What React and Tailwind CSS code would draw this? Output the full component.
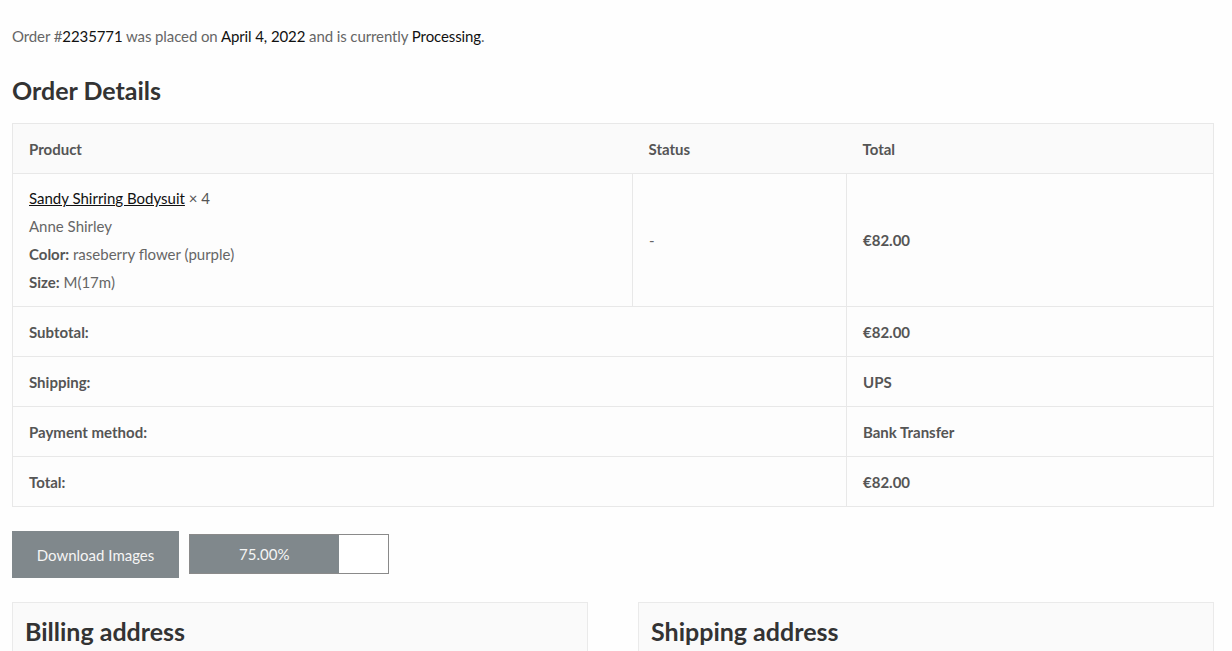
export default function App() {
  const rows = [
    { label: "Subtotal:", value: "€82.00" },
    { label: "Shipping:", value: "UPS" },
    { label: "Payment method:", value: "Bank Transfer" },
    { label: "Total:", value: "€82.00" },
  ];
  const progress = 75;

  return (
    <div className="min-h-screen bg-[#fefefe] px-3 pt-[22px] text-[15px] leading-[28px] text-[#666]" style={{ fontFamily: "Lato, 'Liberation Sans', sans-serif" }}>
      <p className="tracking-[-0.1px]">
        Order #<span className="text-[#111]">2235771</span> was placed on{" "}
        <span className="text-[#111]">April 4, 2022</span> and is currently{" "}
        <span className="text-[#111]">Processing</span>.
      </p>

      <h2 className="mt-[22px] text-[25px] font-bold leading-[36px] text-[#333]">Order Details</h2>

      <table className="mt-[15px] w-[1202px] border-collapse border border-[#e8e8e8] bg-[#fdfdfd]">
        <thead>
          <tr className="bg-[#fafafa] text-left">
            <th className="w-[620px] border-b border-[#e8e8e8] px-4 py-[10.5px] font-bold text-[#555]">Product</th>
            <th className="w-[214px] border-b border-[#e8e8e8] px-4 py-[10.5px] font-bold text-[#555]">Status</th>
            <th className="border-b border-[#e8e8e8] px-4 py-[10.5px] font-bold text-[#555]">Total</th>
          </tr>
        </thead>
        <tbody>
          <tr>
            <td className="border-b border-r border-[#e8e8e8] px-4 py-[10px]">
              <div>
                <a href="#" className="text-[#111] underline">Sandy Shirring Bodysuit</a>{" "}
                <span className="text-[#555]">× 4</span>
              </div>
              <div>Anne Shirley</div>
              <div><span className="font-bold text-[#555]">Color:</span> raseberry flower (purple)</div>
              <div><span className="font-bold text-[#555]">Size:</span> M(17m)</div>
            </td>
            <td className="border-b border-r border-[#e8e8e8] px-4 py-[10px]">-</td>
            <td className="border-b border-[#e8e8e8] px-4 py-[10px] font-bold text-[#555]">€82.00</td>
          </tr>
          {rows.map((row) => (
            <tr key={row.label}>
              <td colSpan={2} className="border-b border-r border-[#e8e8e8] px-4 py-[10.5px] font-bold text-[#555]">{row.label}</td>
              <td className="border-b border-[#e8e8e8] px-4 py-[10.5px] font-bold text-[#555]">{row.value}</td>
            </tr>
          ))}
        </tbody>
      </table>

      <div className="mt-[24px] flex items-start gap-[10px]">
        <button className="h-[47px] w-[167px] bg-[#80888c] text-[15px] text-[#f5f5f5]">Download Images</button>
        <div className="mt-[3px] h-[40px] w-[200px] border border-[#8a8a8a] bg-white">
          <div className="flex h-full items-center justify-center bg-[#80888c] text-[15px] text-[#f5f5f5]" style={{ width: `${progress}%` }}>
            75.00%
          </div>
        </div>
      </div>

      <div className="mt-[24px] grid w-[1202px] grid-cols-2 gap-[50px]">
        <div className="border border-[#eaeaea] bg-[#fafafa] px-3 pt-[10px] pb-[20px]">
          <h3 className="text-[25px] font-bold leading-[36px] text-[#333]">Billing address</h3>
        </div>
        <div className="border border-[#eaeaea] bg-[#fafafa] px-3 pt-[10px] pb-[20px]">
          <h3 className="text-[25px] font-bold leading-[36px] text-[#333]">Shipping address</h3>
        </div>
      </div>
    </div>
  );
}
